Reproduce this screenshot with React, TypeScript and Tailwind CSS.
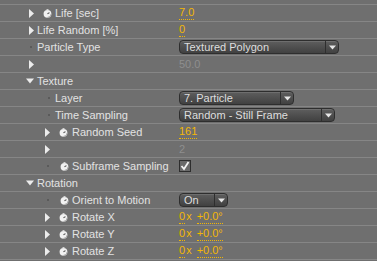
import React from "react";

const ROW = "flex items-center h-[17px] border-b border-[#868686] box-border";

function Twirl(props: { open?: boolean }) {
  if (props.open) {
    return (
      <svg width="8" height="6" viewBox="0 0 8 6" className="shrink-0">
        <path d="M0 0.5 L8 0.5 L4 5.5 Z" fill="#ececec" />
      </svg>
    );
  }
  return (
    <svg width="5" height="9" viewBox="0 0 5 9" className="shrink-0">
      <path d="M0 0 L5 4.5 L0 9 Z" fill="#ececec" />
    </svg>
  );
}

function Dot() {
  return <div className="w-[2px] h-[2px] bg-[#5a5a5a] shrink-0" />;
}

function Watch() {
  return (
    <svg width="9" height="9" viewBox="0 0 9 9" className="shrink-0">
      <circle cx="4.5" cy="4.8" r="3.9" fill="#f2f2f2" />
      <rect x="3.5" y="0" width="2" height="1.2" fill="#d0d0d0" />
      <path d="M4.5 4.8 L6.5 3.6" stroke="#555" strokeWidth="1.1" />
      <path d="M4.5 8.4 A3.6 3.6 0 0 0 8.1 4.8" stroke="#9a9a9a" strokeWidth="0.8" fill="none" />
    </svg>
  );
}

function Val(props: { children: React.ReactNode }) {
  return (
    <span className="text-[#f2b705] border-b border-dotted border-[#f2b705] leading-[11px] pb-[1px]">
      {props.children}
    </span>
  );
}

function Angle() {
  return (
    <span className="text-[#f2b705] flex items-center gap-[0px]">
      <Val>0</Val>
      <span className="ml-[1px] mr-[5px] leading-[11px] pb-[2px]">x</span>
      <Val>+0.0°</Val>
    </span>
  );
}

function Dropdown(props: { text: string; width: number; arrow?: number }) {
  return (
    <div
      className="flex items-stretch h-[14px] rounded-[4px] border border-[#2e2e2e] bg-gradient-to-b from-[#5e5e5e] to-[#414141] shadow-[inset_0_1px_0_#6e6e6e] text-[#dedede]"
      style={{ width: props.width }}
    >
      <div className="flex-1 pl-[4px] leading-[12px]">{props.text}</div>
      <div className="w-[13px] border-l border-[#2e2e2e] flex items-center justify-center">
        <svg width="7" height="5" viewBox="0 0 7 5">
          <path d="M0 0.5 L7 0.5 L3.5 4.5 Z" fill="#e6e6e6" />
        </svg>
      </div>
    </div>
  );
}

function Check() {
  return (
    <div className="w-[12px] h-[12px] border border-[#2e2e2e] bg-[#6a6a6a] flex items-center justify-center">
      <svg width="10" height="10" viewBox="0 0 10 10">
        <path d="M1.5 5 L4 8 L8.5 1" stroke="#f4f4f4" strokeWidth="1.8" fill="none" />
      </svg>
    </div>
  );
}

type Row = {
  lead: React.ReactNode;
  label?: string;
  value?: React.ReactNode;
};

function PropRow(props: Row) {
  return (
    <div className={ROW}>
      <div className="w-[179px] shrink-0 flex items-center">{props.lead}{props.label && <span>{props.label}</span>}</div>
      <div className="flex items-center">{props.value}</div>
    </div>
  );
}

export default function App() {
  return (
    <div
      className="w-[377px] h-[261px] overflow-hidden bg-[#6f6f6f] text-[#e2e2e2] text-[11px]"
      style={{ fontFamily: '"Liberation Sans", Arial, sans-serif' }}
    >
      <div className="h-[5px] border-b border-[#868686] box-border" />
      <PropRow
        lead={<div className="flex items-center pl-[29px] w-[55px]"><Twirl /><div className="ml-[9px]"><Watch /></div></div>}
        label="Life [sec]"
        value={<Val>7.0</Val>}
      />
      <PropRow
        lead={<div className="flex items-center pl-[29px] w-[37px]"><Twirl /></div>}
        label="Life Random [%]"
        value={<Val>0</Val>}
      />
      <PropRow
        lead={<div className="flex items-center pl-[30px] w-[37px]"><Dot /></div>}
        label="Particle Type"
        value={<Dropdown text="Textured Polygon" width={160} />}
      />
      <PropRow
        lead={<div className="flex items-center pl-[29px] w-[37px]"><Twirl /></div>}
        value={<span className="text-[#8e8e8e]">50.0</span>}
      />
      <PropRow
        lead={<div className="flex items-center pl-[26px] w-[37px]"><Twirl open /></div>}
        label="Texture"
      />
      <PropRow
        lead={<div className="flex items-center pl-[48px] w-[55px]"><Dot /></div>}
        label="Layer"
        value={<Dropdown text="7. Particle" width={115} />}
      />
      <PropRow
        lead={<div className="flex items-center pl-[48px] w-[55px]"><Dot /></div>}
        label="Time Sampling"
        value={<Dropdown text="Random - Still Frame" width={156} />}
      />
      <PropRow
        lead={<div className="flex items-center pl-[45px] w-[72px]"><Twirl /><div className="ml-[9px]"><Watch /></div></div>}
        label="Random Seed"
        value={<Val>161</Val>}
      />
      <PropRow
        lead={<div className="flex items-center pl-[45px] w-[72px]"><Twirl /></div>}
        value={<span className="text-[#8e8e8e]">2</span>}
      />
      <PropRow
        lead={<div className="flex items-center pl-[47px] w-[72px]"><Dot /><div className="ml-[11px]"><Watch /></div></div>}
        label="Subframe Sampling"
        value={<Check />}
      />
      <PropRow
        lead={<div className="flex items-center pl-[26px] w-[37px]"><Twirl open /></div>}
        label="Rotation"
      />
      <PropRow
        lead={<div className="flex items-center pl-[47px] w-[72px]"><Dot /><div className="ml-[11px]"><Watch /></div></div>}
        label="Orient to Motion"
        value={<Dropdown text="On" width={49} />}
      />
      <PropRow
        lead={<div className="flex items-center pl-[45px] w-[72px]"><Twirl /><div className="ml-[9px]"><Watch /></div></div>}
        label="Rotate X"
        value={<Angle />}
      />
      <PropRow
        lead={<div className="flex items-center pl-[45px] w-[72px]"><Twirl /><div className="ml-[9px]"><Watch /></div></div>}
        label="Rotate Y"
        value={<Angle />}
      />
      <PropRow
        lead={<div className="flex items-center pl-[45px] w-[72px]"><Twirl /><div className="ml-[9px]"><Watch /></div></div>}
        label="Rotate Z"
        value={<Angle />}
      />
      <div className="h-[2px]" />
    </div>
  );
}
